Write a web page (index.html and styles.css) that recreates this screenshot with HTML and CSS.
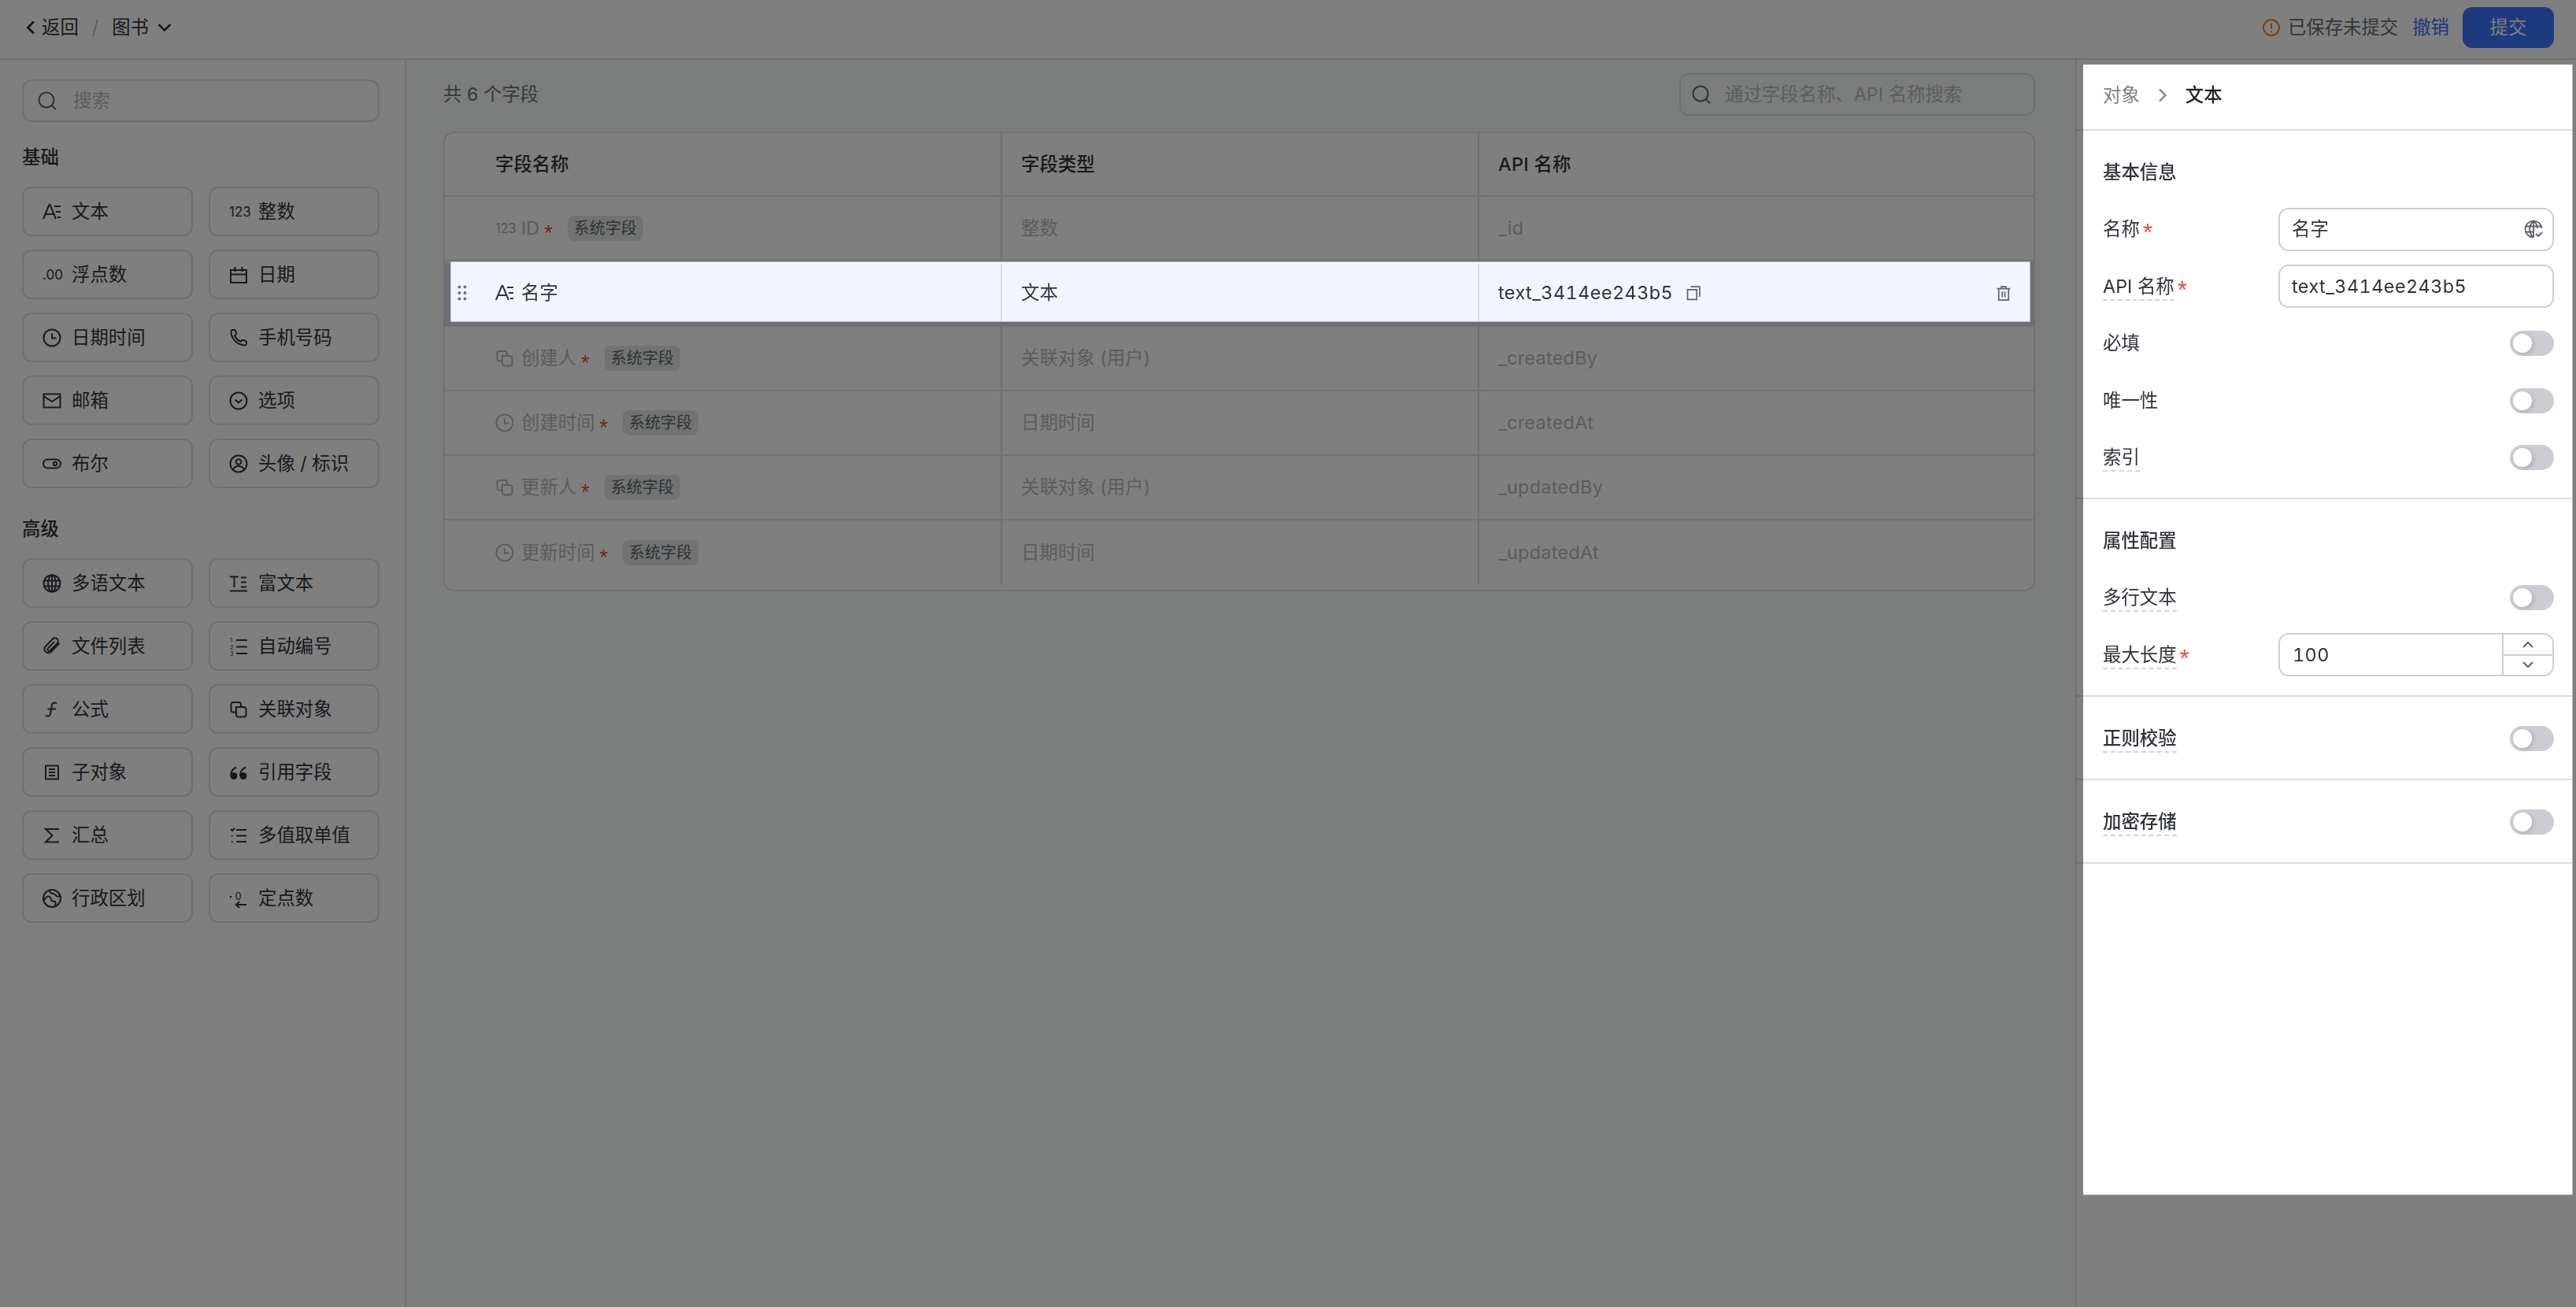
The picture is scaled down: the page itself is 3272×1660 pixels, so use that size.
FILE: index.html
```html
<!DOCTYPE html>
<html lang="zh-CN">
<head>
    <meta charset="UTF-8">
    <title>图书 - 字段</title>
    <link rel="stylesheet" href="styles.css">
</head>
<body>
    <!-- icon sprite -->
    <svg class="sprite" xmlns="http://www.w3.org/2000/svg">
        <symbol id="i-text" viewBox="0 0 24 24"><path d="M1 21 8.500 3h1L17 21M4 15h10.500M15 5h8M17 12h6M19 19h4"/></symbol>
        <symbol id="i-date" viewBox="0 0 24 24"><path d="M2 6h20v16H2zM2 11.500h20M7.500 2v6M16.500 2v6"/></symbol>
        <symbol id="i-clock" viewBox="0 0 24 24"><circle cx="12" cy="12" r="10.500"/><path d="M12 6.500V12.500h5.500"/></symbol>
        <symbol id="i-phone" viewBox="0 0 24 24"><path d="M22 17.500v2a2 2 0 0 1-2.200 2A18 18 0 0 1 2.500 4.200 2 2 0 0 1 4.500 2h2a2 2 0 0 1 2 1.700l.5 2.800a2 2 0 0 1-.6 1.700L7.200 9.500a15 15 0 0 0 7.300 7.300l1.300-1.200a2 2 0 0 1 1.700-.6l2.800.5a2 2 0 0 1 1.700 2z"/></symbol>
        <symbol id="i-mail" viewBox="0 0 24 24"><path d="M1.500 3.500h21v17h-21zM2 6.500 12 13l10-6.500"/></symbol>
        <symbol id="i-select" viewBox="0 0 24 24"><circle cx="12" cy="12" r="10.500"/><path d="m7.500 10.500 4.500 4 4.500-4"/></symbol>
        <symbol id="i-bool" viewBox="0 0 24 24"><rect x="1" y="6.500" width="22" height="11" rx="5.500"/><circle cx="16" cy="12" r="2.200"/></symbol>
        <symbol id="i-avatar" viewBox="0 0 24 24"><circle cx="12" cy="12" r="10.500"/><circle cx="12" cy="9.500" r="3.300"/><path d="M4.800 19.500c1.500-3 4-4.500 7.200-4.500s5.700 1.500 7.200 4.500"/></symbol>
        <symbol id="i-globe" viewBox="0 0 24 24"><circle cx="12" cy="12" r="10.500"/><ellipse cx="12" cy="12" rx="5" ry="10.500"/><path d="M12 1.500v21M2 8.500h20M2 15.500h20"/></symbol>
        <symbol id="i-rich" viewBox="0 0 24 24"><path d="M1 3.500h11M6.500 3.500V17M1 21.500h22M15 4.500h7M15 10.500h7M15 16.500h7"/></symbol>
        <symbol id="i-clip" viewBox="0 0 24 24"><path d="m21.500 8-10.700 11a5 5 0 0 1-7.500-6.500L13 2.500a4 4 0 0 1 5.700 5.700l-9.200 9.200a2 2 0 0 1-2.800-2.800l8.500-8.500"/></symbol>
        <symbol id="i-auto" viewBox="0 0 24 24"><path d="M9 4h14M9 12.500h14M9 21h14"/><text class="icon-digit" x="1" y="7">1</text><text class="icon-digit" x="1" y="15.500">2</text><text class="icon-digit" x="1" y="24">3</text></symbol>
        <symbol id="i-formula" viewBox="0 0 24 24"><path d="M18 4.500c-3-2-5.500-1-6 2l-2 11c-.5 3-3 4-6 2M6.500 11.500H17"/></symbol>
        <symbol id="i-link" viewBox="0 0 24 24"><path d="M15 9V5.500A2.500 2.500 0 0 0 12.500 3H5a2.500 2.500 0 0 0-2.500 2.500V13A2.500 2.500 0 0 0 5 15.500h4"/><path d="M9 9h10a2.500 2.500 0 0 1 2.500 2.500V19a2.500 2.500 0 0 1-2.500 2.500h-7.500A2.500 2.500 0 0 1 9 19z"/></symbol>
        <symbol id="i-sub" viewBox="0 0 24 24"><path d="M4 3.500h16v17H4zM8 8h8M8 12h8M8 16h8"/></symbol>
        <symbol id="i-quote" viewBox="0 0 24 24"><path d="M2 16c0-5 2-8 7-10.500M14 16c0-5 2-8 7-10.500"/><circle class="icon-fill" cx="6" cy="16.500" r="4.500"/><circle class="icon-fill" cx="18" cy="16.500" r="4.500"/></symbol>
        <symbol id="i-sum" viewBox="0 0 24 24"><path d="M21 4H4l8.500 8L4 20.500h17"/></symbol>
        <symbol id="i-multi" viewBox="0 0 24 24"><path d="M9 5h13M9 12.500h13M9 20h13M2 4l2 2 3-3M3 12.500h1.500M3 20h1.500"/></symbol>
        <symbol id="i-area" viewBox="0 0 24 24"><circle cx="12" cy="12" r="11"/><path d="M1.500 15c2.500-4.500 5-6.500 7.500-5s1 4.500 3.500 5.500 3.500-1 4 1.500-.5 4-1 5M9 1.500c-.5 2 1.500 4.500 4.500 4.500s3 3.500 5.500 3.500 3.500-1 4-1"/></symbol>
        <symbol id="i-fixed" viewBox="0 0 24 24"><circle class="icon-fill" cx="2" cy="10" r="1.300"/><text class="icon-zero" x="7.500" y="14">0</text><path d="M22 20H9M13 16l-4 4 4 4"/></symbol>
        <symbol id="i-drag" viewBox="0 0 12 20"><circle class="icon-fill" cx="2.500" cy="2.500" r="2"/><circle class="icon-fill" cx="9.500" cy="2.500" r="2"/><circle class="icon-fill" cx="2.500" cy="10" r="2"/><circle class="icon-fill" cx="9.500" cy="10" r="2"/><circle class="icon-fill" cx="2.500" cy="17.500" r="2"/><circle class="icon-fill" cx="9.500" cy="17.500" r="2"/></symbol>
        <symbol id="i-copy" viewBox="0 0 24 24"><path d="M3 7h14v15H3zM8 2.500h13.500V18"/></symbol>
        <symbol id="i-trash" viewBox="0 0 24 24"><path d="M2 5.500h20M8.500 5.500V2.500h7v3M4.500 5.500V23h15V5.500M10 10v8.500M14 10v8.500"/></symbol>
        <symbol id="i-globe-check" viewBox="0 0 24 24"><path d="M22.500 11A10.500 10.500 0 1 0 11 22.500M12 1.500c-6.500 6-6.500 15 0 21M12 1.500c3.500 3 5 6 5 9.500M12 1.500v21M2 8.500h20M2 15.500h10M15 18l3 3 5-5"/></symbol>
        <symbol id="i-search" viewBox="0 0 24 24"><circle cx="11" cy="11" r="9.500"/><path d="m18 18 5 5"/></symbol>
    </svg>

    <header class="topbar">
        <div class="topbar-left">
            <svg class="back-icon" viewBox="0 0 12 18"><path d="M10 1.500 2.500 9l7.500 7.500"/></svg>
            <span>返回</span>
            <span class="crumb-sep">/</span>
            <span>图书</span>
            <svg class="down-icon" viewBox="0 0 18 10"><path d="M1.500 1 9 8.500 16.500 1"/></svg>
        </div>
        <div class="topbar-right">
            <svg class="warn-icon" viewBox="0 0 24 24"><circle cx="12" cy="12" r="10"/><path d="M12 6.500v7M12 16.500v1.500"/></svg>
            <span class="save-state">已保存未提交</span>
            <a class="undo-link">撤销</a>
            <button class="submit-button">提交</button>
        </div>
    </header>

    <div class="workspace">
        <aside class="sidebar">
            <div class="search-box">
                <svg class="icon"><use href="#i-search"/></svg>
                <span class="placeholder">搜索</span>
            </div>

            <h3 class="group-title">基础</h3>
            <div class="type-grid">
                <div class="type-button"><svg class="icon"><use href="#i-text"/></svg>文本</div>
                <div class="type-button"><span class="icon-text">123</span>整数</div>
                <div class="type-button"><span class="icon-text">.00</span>浮点数</div>
                <div class="type-button"><svg class="icon"><use href="#i-date"/></svg>日期</div>
                <div class="type-button"><svg class="icon"><use href="#i-clock"/></svg>日期时间</div>
                <div class="type-button"><svg class="icon"><use href="#i-phone"/></svg>手机号码</div>
                <div class="type-button"><svg class="icon"><use href="#i-mail"/></svg>邮箱</div>
                <div class="type-button"><svg class="icon"><use href="#i-select"/></svg>选项</div>
                <div class="type-button"><svg class="icon"><use href="#i-bool"/></svg>布尔</div>
                <div class="type-button"><svg class="icon"><use href="#i-avatar"/></svg>头像 / 标识</div>
            </div>

            <h3 class="group-title group-title-next">高级</h3>
            <div class="type-grid">
                <div class="type-button"><svg class="icon"><use href="#i-globe"/></svg>多语文本</div>
                <div class="type-button"><svg class="icon"><use href="#i-rich"/></svg>富文本</div>
                <div class="type-button"><svg class="icon"><use href="#i-clip"/></svg>文件列表</div>
                <div class="type-button"><svg class="icon"><use href="#i-auto"/></svg>自动编号</div>
                <div class="type-button"><svg class="icon"><use href="#i-formula"/></svg>公式</div>
                <div class="type-button"><svg class="icon"><use href="#i-link"/></svg>关联对象</div>
                <div class="type-button"><svg class="icon"><use href="#i-sub"/></svg>子对象</div>
                <div class="type-button"><svg class="icon"><use href="#i-quote"/></svg>引用字段</div>
                <div class="type-button"><svg class="icon"><use href="#i-sum"/></svg>汇总</div>
                <div class="type-button"><svg class="icon"><use href="#i-multi"/></svg>多值取单值</div>
                <div class="type-button"><svg class="icon"><use href="#i-area"/></svg>行政区划</div>
                <div class="type-button"><svg class="icon"><use href="#i-fixed"/></svg>定点数</div>
            </div>
        </aside>

        <main class="main-content">
            <div class="toolbar">
                <span class="field-count">共 6 个字段</span>
                <div class="search-box search-box-wide">
                    <svg class="icon"><use href="#i-search"/></svg>
                    <span class="placeholder">通过字段名称、API 名称搜索</span>
                </div>
            </div>

            <div class="field-table">
                <div class="field-row field-head">
                    <div class="cell cell-name">字段名称</div>
                    <div class="cell cell-type">字段类型</div>
                    <div class="cell cell-api">API 名称</div>
                </div>
                <div class="field-row">
                    <div class="cell cell-name"><span class="icon-text icon-text-small">123</span>ID<span class="req-star">*</span><span class="sys-tag">系统字段</span></div>
                    <div class="cell cell-type">整数</div>
                    <div class="cell cell-api">_id</div>
                </div>

                <!-- 当前选中的字段，露出在遮罩之上 -->
                <div class="field-row field-row-selected">
                    <div class="selected-inner">
                        <div class="cell cell-name">
                            <svg class="drag-icon"><use href="#i-drag"/></svg>
                            <svg class="icon"><use href="#i-text"/></svg>名字
                        </div>
                        <div class="cell cell-type">文本</div>
                        <div class="cell cell-api">
                            <span class="api-value">text_3414ee243b5</span>
                            <svg class="copy-icon"><use href="#i-copy"/></svg>
                            <svg class="trash-icon"><use href="#i-trash"/></svg>
                        </div>
                    </div>
                </div>

                <div class="field-row">
                    <div class="cell cell-name"><svg class="icon"><use href="#i-link"/></svg>创建人<span class="req-star">*</span><span class="sys-tag">系统字段</span></div>
                    <div class="cell cell-type">关联对象 (用户)</div>
                    <div class="cell cell-api">_createdBy</div>
                </div>
                <div class="field-row">
                    <div class="cell cell-name"><svg class="icon"><use href="#i-clock"/></svg>创建时间<span class="req-star">*</span><span class="sys-tag">系统字段</span></div>
                    <div class="cell cell-type">日期时间</div>
                    <div class="cell cell-api">_createdAt</div>
                </div>
                <div class="field-row">
                    <div class="cell cell-name"><svg class="icon"><use href="#i-link"/></svg>更新人<span class="req-star">*</span><span class="sys-tag">系统字段</span></div>
                    <div class="cell cell-type">关联对象 (用户)</div>
                    <div class="cell cell-api">_updatedBy</div>
                </div>
                <div class="field-row field-row-last">
                    <div class="cell cell-name"><svg class="icon"><use href="#i-clock"/></svg>更新时间<span class="req-star">*</span><span class="sys-tag">系统字段</span></div>
                    <div class="cell cell-type">日期时间</div>
                    <div class="cell cell-api">_updatedAt</div>
                </div>
            </div>
        </main>

        <aside class="prop-column">
            <div class="prop-panel">
                <div class="prop-crumb prop-divided">
                    <span class="crumb-parent">对象</span>
                    <svg class="crumb-arrow" viewBox="0 0 12 18"><path d="M2 1.500 9.500 9 2 16.500"/></svg>
                    <span class="crumb-current">文本</span>
                </div>

                <section class="prop-section prop-divided">
                    <h4 class="prop-title">基本信息</h4>
                    <div class="prop-row">
                        <label class="prop-label">名称<span class="label-star">*</span></label>
                        <div class="text-input">名字<svg class="input-icon"><use href="#i-globe-check"/></svg></div>
                    </div>
                    <div class="prop-row">
                        <label class="prop-label"><span class="hint">API 名称</span><span class="label-star">*</span></label>
                        <div class="text-input"><span class="api-value">text_3414ee243b5</span></div>
                    </div>
                    <div class="prop-row">
                        <label class="prop-label">必填</label>
                        <span class="switch"></span>
                    </div>
                    <div class="prop-row">
                        <label class="prop-label">唯一性</label>
                        <span class="switch"></span>
                    </div>
                    <div class="prop-row">
                        <label class="prop-label"><span class="hint">索引</span></label>
                        <span class="switch"></span>
                    </div>
                </section>

                <section class="prop-section prop-divided">
                    <h4 class="prop-title">属性配置</h4>
                    <div class="prop-row">
                        <label class="prop-label"><span class="hint">多行文本</span></label>
                        <span class="switch"></span>
                    </div>
                    <div class="prop-row">
                        <label class="prop-label"><span class="hint">最大长度</span><span class="label-star">*</span></label>
                        <div class="text-input number-input">
                            <span class="api-value">100</span>
                            <div class="stepper">
                                <span class="step"><svg viewBox="0 0 14 9"><path d="M1 8l6-6 6 6"/></svg></span>
                                <span class="step"><svg viewBox="0 0 14 9"><path d="M1 1l6 6 6-6"/></svg></span>
                            </div>
                        </div>
                    </div>
                </section>

                <section class="prop-section prop-section-single prop-divided">
                    <div class="prop-row">
                        <label class="prop-label prop-label-strong"><span class="hint">正则校验</span></label>
                        <span class="switch"></span>
                    </div>
                </section>

                <section class="prop-section prop-section-single prop-divided">
                    <div class="prop-row">
                        <label class="prop-label prop-label-strong"><span class="hint">加密存储</span></label>
                        <span class="switch"></span>
                    </div>
                </section>
            </div>
        </aside>
    </div>

    <div class="mask"></div>
</body>
</html>
```

FILE: styles.css
```css
* {
    box-sizing: border-box;
}

body {
    margin: 0;
    height: 100vh;
    overflow: hidden;
    display: flex;
    flex-direction: column;
    font-family: Inter, "Noto Sans CJK SC", sans-serif;
    font-size: 23.4px;
    line-height: 32px;
    color: #30333a;
    background-color: white;
}

.sprite {
    display: none;
}

.mask {
    position: fixed;
    inset: 0;
    z-index: 10;
    background-color: rgba(0, 0, 0, 0.5);
}

/* 图标 */
.icon {
    width: 24px;
    height: 24px;
    flex: none;
    fill: none;
    stroke: currentColor;
    stroke-width: 2;
}

.icon-fill {
    fill: currentColor;
    stroke: none;
}

.icon-digit {
    font-size: 7.500px;
    fill: currentColor;
    stroke: none;
}

.icon-zero {
    font-size: 13px;
    fill: currentColor;
    stroke: none;
}

.icon-text {
    width: 24px;
    flex: none;
    font-size: 17px;
    text-align: center;
    white-space: nowrap;
}

.icon-text-small {
    color: #a9adb3;
    letter-spacing: -0.5px;
}

/* 顶栏 */
.topbar {
    height: 76px;
    flex: none;
    display: flex;
    justify-content: space-between;
    align-items: center;
    padding: 0 28px 4px 33px;
    border-bottom: 2px solid #e0e1e3;
}

.topbar-left {
    display: flex;
    align-items: center;
}

.back-icon {
    width: 12px;
    height: 18px;
    margin-right: 8px;
    fill: none;
    stroke: currentColor;
    stroke-width: 3;
}

.crumb-sep {
    margin: 0 17px;
    color: #b5b8bd;
}

.down-icon {
    width: 18px;
    height: 10px;
    margin-left: 11px;
    fill: none;
    stroke: currentColor;
    stroke-width: 2.600;
}

.topbar-right {
    display: flex;
    align-items: center;
}

.warn-icon {
    width: 24px;
    height: 24px;
    margin-right: 9px;
    fill: none;
    stroke: #f5781e;
    stroke-width: 2;
}

.save-state {
    color: #666a70;
}

.undo-link {
    margin-left: 18px;
    color: #3c6cf0;
}

.submit-button {
    width: 116px;
    height: 52px;
    margin-left: 17px;
    border: none;
    border-radius: 12px;
    background-color: #3c74ff;
    color: white;
    font: inherit;
}

/* 三栏 */
.workspace {
    flex: 1;
    display: flex;
    min-height: 0;
}

.sidebar {
    width: 516px;
    flex: none;
    padding: 25px 32px 0 28px;
    border-right: 2px solid #e0e1e3;
}

.search-box {
    height: 54px;
    display: flex;
    align-items: center;
    gap: 21px;
    padding: 0 18px;
    border: 2px solid #dddee0;
    border-radius: 12px;
    color: #5e6268;
}

.placeholder {
    color: #b7bac0;
}

.group-title {
    margin: 29px 0 21px;
    font-size: 23.4px;
    font-weight: 500;
    line-height: 32px;
}

.group-title-next {
    margin-top: 36px;
}

.type-grid {
    display: grid;
    grid-template-columns: 217px 217px;
    column-gap: 20px;
    row-gap: 17px;
}

.type-button {
    height: 63px;
    display: flex;
    align-items: center;
    gap: 13px;
    padding-left: 24px;
    border: 2px solid #dddee0;
    border-radius: 12px;
    white-space: nowrap;
}

.main-content {
    flex: 1;
    min-width: 0;
    padding: 17px 51px 0 47px;
    background-color: #f7faf8;
}

.toolbar {
    display: flex;
    justify-content: space-between;
    align-items: center;
    margin-bottom: 20px;
}

.field-count {
    color: #6e7278;
}

.search-box-wide {
    width: 452px;
    gap: 18px;
    padding: 0 14px;
}

.field-table {
    padding-bottom: 6px;
    border: 2px solid #e0e1e3;
    border-radius: 14px;
    background-color: white;
    overflow: hidden;
}

.field-row {
    height: 82px;
    display: grid;
    grid-template-columns: 708px 606px 1fr;
    border-bottom: 2px solid #e0e1e3;
    color: #b4b8bc;
}

.field-head {
    height: 81px;
    color: #30333a;
    font-weight: 500;
}

.field-row-last {
    border-bottom: none;
}

.cell {
    display: flex;
    align-items: center;
    min-width: 0;
    border-right: 2px solid #e0e1e3;
    padding-left: 24px;
    white-space: nowrap;
}

.cell-name {
    padding-left: 64px;
    gap: 9px;
}

.cell-api {
    border-right: none;
    letter-spacing: 0.3px;
}

.api-value {
    font-feature-settings: "tnum";
    letter-spacing: 0.45px;
}

.req-star {
    height: 32px;
    margin-left: -3px;
    font-family: "Liberation Sans", sans-serif;
    font-size: 27px;
    line-height: 44px;
    color: #e5483f;
}

.sys-tag {
    height: 32px;
    margin-left: 10px;
    padding: 0 8px;
    border-radius: 8px;
    background-color: #e2e6e6;
    color: #5e6268;
    font-size: 20px;
    line-height: 32px;
    letter-spacing: 0;
}

/* 选中行 */
.field-row-selected {
    display: block;
    background-color: #dddcec;
}

.selected-inner {
    position: relative;
    z-index: 20;
    height: 75px;
    margin: 1px 5px 0 8px;
    padding-top: 2px;
    display: grid;
    grid-template-columns: 700px 606px 1fr;
    background-color: #f2f4ff;
    box-shadow: 0 0 0 1px #b9bbc6;
    color: #30333a;
}

.selected-inner .cell {
    border-right-color: #d9dbe6;
}

.selected-inner .cell-name {
    padding-left: 8px;
}

.selected-inner .cell-api {
    padding-right: 23px;
    border-right: none;
    letter-spacing: 0;
}

.drag-icon {
    width: 12px;
    height: 20px;
    margin-right: 27px;
    color: #6e7278;
}

.copy-icon {
    width: 20px;
    height: 20px;
    margin-left: 16px;
    fill: none;
    stroke: #5e6268;
    stroke-width: 2;
}

.trash-icon {
    width: 20px;
    height: 20px;
    margin-left: auto;
    fill: none;
    stroke: #5e6268;
    stroke-width: 2;
}

/* 右侧属性面板 */
.prop-column {
    width: 636px;
    flex: none;
    padding: 6px 5px 0 8px;
    border-left: 2px solid #e0e1e3;
}

.prop-panel {
    position: relative;
    z-index: 20;
    width: 621px;
    height: 1435px;
    background-color: white;
    box-shadow: 0 1px 0 #b9b9b9, 1px 0 0 #b9b9b9;
}

.prop-divided {
    position: relative;
    border-bottom: 2px solid #dcdde0;
}

/* 分隔线在面板外的部分仍在遮罩下 */
.prop-divided::before {
    content: "";
    position: absolute;
    left: -8px;
    bottom: -2px;
    width: 8px;
    height: 2px;
    background-color: #6e6e6e;
}

.prop-crumb {
    height: 84px;
    display: flex;
    align-items: center;
    padding: 0 0 5px 25px;
}

.crumb-parent {
    color: #7a7e85;
}

.crumb-arrow {
    width: 12px;
    height: 18px;
    margin: 0 23px 0 23px;
    fill: none;
    stroke: #8e9299;
    stroke-width: 2.500;
}

.crumb-current {
    color: #1f2329;
    font-weight: 500;
}

.prop-section {
    padding: 37px 23px 23px 25px;
}

.prop-section-single {
    height: 106px;
    padding-top: 25px;
    padding-bottom: 0;
}

.prop-title {
    margin: 0 0 28px;
    font-size: 23.4px;
    font-weight: 500;
    line-height: 32px;
    color: #30333a;
}

.prop-row {
    height: 56px;
    display: flex;
    justify-content: space-between;
    align-items: center;
}

.prop-row + .prop-row {
    margin-top: 16.500px;
}

.prop-label {
    display: flex;
    align-items: center;
    color: #30333a;
}

.prop-label-strong {
    font-weight: 500;
}

.hint {
    margin-bottom: -2px;
    border-bottom: 2px dashed #d2d4d9;
}

.label-star {
    height: 32px;
    margin-left: 4px;
    font-family: "Liberation Sans", sans-serif;
    color: #ef4a41;
    font-size: 32px;
    line-height: 40px;
}

.text-input {
    width: 350px;
    height: 55px;
    display: flex;
    align-items: center;
    justify-content: space-between;
    padding: 0 12px 0 15px;
    border: 2px solid #cdcfd4;
    border-radius: 13px;
    color: #30333a;
}

.input-icon {
    width: 24px;
    height: 24px;
    fill: none;
    stroke: #5e6268;
    stroke-width: 1.800;
}

.number-input {
    padding: 0 0 0 16px;
    overflow: hidden;
}

.stepper {
    width: 64px;
    height: 100%;
    display: flex;
    flex-direction: column;
    border-left: 2px solid #cdcfd4;
}

.step {
    flex: 1;
    display: flex;
    align-items: center;
    justify-content: center;
}

.step + .step {
    border-top: 2px solid #cdcfd4;
}

.step svg {
    width: 14px;
    height: 9px;
    fill: none;
    stroke: #5e6268;
    stroke-width: 2;
}

.switch {
    width: 56px;
    height: 32px;
    display: flex;
    align-items: center;
    padding-left: 4px;
    border-radius: 16px;
    background-color: #cccdd2;
}

.switch::before {
    content: "";
    width: 24px;
    height: 24px;
    border-radius: 50%;
    background-color: white;
    box-shadow: 2px 2px 6px rgba(0, 0, 0, 0.15);
}
```
